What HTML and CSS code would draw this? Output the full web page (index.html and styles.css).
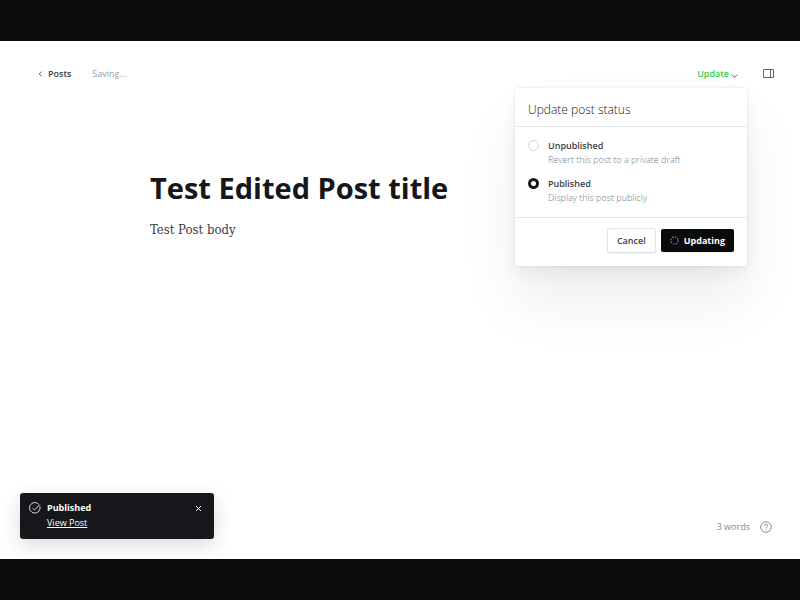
FILE: index.html
```html
<!DOCTYPE html>
<html lang="en">
<head>
<meta charset="utf-8">
<meta name="viewport" content="width=device-width, initial-scale=1">
<title>Post editor</title>
<link rel="stylesheet" href="styles.css">
</head>
<body>
<div class="app">
  <header class="topbar">
    <a class="back" href="#"><svg class="back-icon" viewBox="0 0 6 8"><path d="M4.500 1 1.500 4l3 3"/></svg>Posts</a>
    <span class="saving">Saving...</span>
    <div class="actions">
      <div class="publish">
        <button class="update" type="button">Update<svg class="caret" viewBox="0 0 8 6"><path d="M1 1.500 4 4.500l3-3"/></svg></button>
        <form class="menu">
          <h2 class="menu-title">Update post status</h2>
          <div class="options">
            <div class="option">
              <input class="radio" type="radio" name="status" id="unpublished">
              <label class="option-text" for="unpublished"><span class="option-name">Unpublished</span><span class="option-hint">Revert this post to a private draft</span></label>
            </div>
            <div class="option">
              <input class="radio" type="radio" name="status" id="published" checked>
              <label class="option-text" for="published"><span class="option-name">Published</span><span class="option-hint">Display this post publicly</span></label>
            </div>
          </div>
          <div class="menu-footer">
            <button class="button" type="button">Cancel</button>
            <button class="button primary" type="button"><svg class="spinner" viewBox="0 0 10 10"><circle cx="5" cy="5" r="4"/></svg>Updating</button>
          </div>
        </form>
      </div>
      <button class="sidebar-toggle" type="button" aria-label="Settings"><svg class="sidebar-icon" viewBox="0 0 12 10"><path d="M1.500.5h10v8h-10zM8.500.5v8"/></svg></button>
    </div>
  </header>
  <main class="editor">
    <h1 class="title">Test Edited Post title</h1>
    <p class="body-text">Test Post body</p>
  </main>
  <footer class="status">
    <span>3 words</span>
    <a class="help" href="#" aria-label="Help"><svg class="help-icon" viewBox="0 0 12 12"><circle cx="6" cy="6" r="5.300"/><path d="M4.300 4.800C4.300 2.500 7.700 2.600 7.700 4.700 7.700 6 6 5.900 6 7.400M6 8.300v.9"/></svg></a>
  </footer>
  <aside class="toast">
    <svg class="check" viewBox="0 0 12 12"><path d="M10.900 4.300A5.300 5.300 0 1 1 9.700 2.200M3.500 6.200 5.400 8 10.900 2.500"/></svg>
    <div class="toast-text"><strong>Published</strong><a class="view" href="#">View Post</a></div>
    <button class="close" type="button" aria-label="Close"><svg class="close-icon" viewBox="0 0 7 7"><path d="m1 1 5 5M6 1 1 6"/></svg></button>
  </aside>
</div>
</body>
</html>
```
FILE: styles.css
```css
* { box-sizing: border-box; }
body {
  margin: 0;
  min-height: 100vh;
  padding: 41px 0;
  display: flex;
  background: #0d0d0d;
  font-family: "Open Sans", "Noto Sans", sans-serif;
  font-size: 9px;
  line-height: 14px;
  color: #394047;
}
svg { fill: none; stroke: currentColor; display: block; flex: none; }
button { font: inherit; color: inherit; border: 0; background: none; padding: 0; cursor: pointer; }
a { color: inherit; text-decoration: none; }
.app { position: relative; flex: 1; display: flex; flex-direction: column; background: #fff; overflow: hidden; }
.topbar { display: flex; align-items: center; padding: 26px 26px 0 38px; }
.back { display: flex; align-items: center; gap: 5px; font-weight: 600; }
.back-icon { width: 5px; height: 8px; }
.saving { margin-left: 21px; color: #95a1ad; }
.actions { display: flex; align-items: center; gap: 24px; margin-left: auto; }
.publish { position: relative; }
.update { display: flex; align-items: center; gap: 2px; color: #30cf43; font-weight: 600; }
.caret { width: 7px; height: 6px; color: #394047; margin-top: 3px; }
.sidebar-icon { width: 12px; height: 10px; color: #5d656d; }
.menu {
  position: absolute;
  top: 21px;
  right: -9px;
  width: 232px;
  background: #fff;
  border-radius: 3px;
  box-shadow: 0 0 3px rgba(0, 0, 0, .1), 0 8px 16px rgba(0, 0, 0, .05), 0 36px 60px rgba(0, 0, 0, .07);
  z-index: 1;
}
.menu-title { margin: 0; padding: 14px 13px 8px; font-size: 12px; line-height: 16px; font-weight: 300; color: #15171a; border-bottom: 1px solid #e6e8ea; }
.options { display: flex; flex-direction: column; gap: 10px; padding: 12px 13px; }
.option { display: flex; gap: 9px; }
.radio { appearance: none; flex: none; width: 11px; height: 11px; margin: 1px 0 0; border: 1px solid #d0d6dc; border-radius: 50%; background: #fff; }
.radio:checked { border: 3px solid #15171a; }
.option-text { display: flex; flex-direction: column; }
.option-name { font-weight: 600; }
.option-hint { color: #708090; font-weight: 300; }
.menu-footer { display: flex; justify-content: flex-end; align-items: center; gap: 5px; padding: 10px 13px 13px; border-top: 1px solid #e6e8ea; }
.button { height: 25px; padding: 0 9px; border: 1px solid #dfe3e6; border-radius: 2px; background: #fff; font-weight: 600; box-shadow: 0 1px 1px rgba(0, 0, 0, .06); }
.primary { display: flex; align-items: center; gap: 5px; height: 23px; border: 0; background: #090b0d; color: #fff; font-weight: 700; }
.spinner { width: 9px; height: 9px; stroke-width: 1.5; stroke-dasharray: 1.6 1.542; color: #7f858b; }
.editor { flex: 1; padding: 84px 150px 0; }
.title { margin: 0; color: #15171a; font-size: 29px; line-height: 46px; font-weight: 700; }
.body-text { margin: 9px 0 0; font-family: "DejaVu Serif Condensed", "DejaVu Serif", serif; font-size: 13px; line-height: 20px; }
.status { display: flex; justify-content: flex-end; align-items: center; gap: 10px; padding: 0 28px 25px; color: #7c8b9a; }
.help-icon { width: 12px; height: 12px; }
.toast {
  position: absolute;
  left: 20px;
  bottom: 20px;
  width: 194px;
  display: flex;
  align-items: flex-start;
  gap: 6px;
  padding: 8px 12px 9px 9px;
  border-radius: 3px;
  background: #15171a;
  color: #fff;
  box-shadow: 0 6px 20px rgba(0, 0, 0, .15);
}
.check { width: 12px; height: 12px; margin-top: 1px; color: #d5d9dc; }
.toast-text { flex: 1; display: flex; flex-direction: column; align-items: flex-start; gap: 1px; }
.toast-text strong { font-weight: 700; }
.view { text-decoration: underline; }
.close-icon { width: 7px; height: 7px; margin-top: 4px; }
```
